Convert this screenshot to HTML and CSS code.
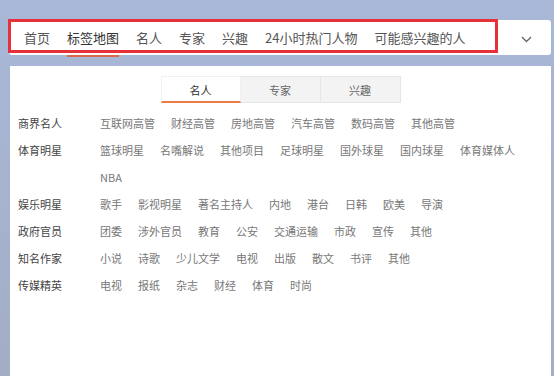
FILE: index.html
```html
<!DOCTYPE html>
<html lang="zh-CN">
<head>
  <meta charset="UTF-8">
  <meta name="viewport" content="width=device-width, initial-scale=1.0">
  <title>标签地图</title>
  <link rel="stylesheet" href="styles.css">
</head>
<body>

  <!-- 顶部导航 -->
  <div class="topnav">
    <a class="nav-item">首页</a>
    <a class="nav-item active">标签地图</a>
    <a class="nav-item">名人</a>
    <a class="nav-item">专家</a>
    <a class="nav-item">兴趣</a>
    <a class="nav-item">24小时热门人物</a>
    <a class="nav-item">可能感兴趣的人</a>
    <span class="nav-more">
      <svg width="11" height="7" viewBox="0 0 11 7"><path d="M1 1l4.5 4.5L10 1" fill="none" stroke="#666" stroke-width="1.4"/></svg>
    </span>
    <div class="mark"></div>
  </div>

  <!-- 标签面板 -->
  <div class="panel">
    <div class="tabs">
      <span class="tab active">名人</span>
      <span class="tab">专家</span>
      <span class="tab">兴趣</span>
    </div>

    <div class="row">
      <div class="label">商界名人</div>
      <div class="items">
        <a>互联网高管</a><a>财经高管</a><a>房地高管</a><a>汽车高管</a><a>数码高管</a><a>其他高管</a>
      </div>
    </div>
    <div class="row">
      <div class="label">体育明星</div>
      <div class="items">
        <a>篮球明星</a><a>名嘴解说</a><a>其他项目</a><a>足球明星</a><a>国外球星</a><a>国内球星</a><a>体育媒体人</a><a>NBA</a>
      </div>
    </div>
    <div class="row">
      <div class="label">娱乐明星</div>
      <div class="items">
        <a>歌手</a><a>影视明星</a><a>著名主持人</a><a>内地</a><a>港台</a><a>日韩</a><a>欧美</a><a>导演</a>
      </div>
    </div>
    <div class="row">
      <div class="label">政府官员</div>
      <div class="items">
        <a>团委</a><a>涉外官员</a><a>教育</a><a>公安</a><a>交通运输</a><a>市政</a><a>宣传</a><a>其他</a>
      </div>
    </div>
    <div class="row">
      <div class="label">知名作家</div>
      <div class="items">
        <a>小说</a><a>诗歌</a><a>少儿文学</a><a>电视</a><a>出版</a><a>散文</a><a>书评</a><a>其他</a>
      </div>
    </div>
    <div class="row">
      <div class="label">传媒精英</div>
      <div class="items">
        <a>电视</a><a>报纸</a><a>杂志</a><a>财经</a><a>体育</a><a>时尚</a>
      </div>
    </div>
  </div>

</body>
</html>
```

FILE: styles.css
```css
body {
  margin: 0;
  padding: 20px 3px 0 9px;
  height: 376px;
  box-sizing: border-box;
  overflow: hidden;
  font-family: "Noto Sans CJK SC", "Noto Sans", sans-serif;
  background: linear-gradient(180deg, #a9b8d8 0%, #a6b2cd 60%, #a3adc4 100%);
}
.topnav {
  position: relative;
  display: flex;
  align-items: center;
  height: 35px;
  padding-left: 15px;
  background-color: white;
  border-radius: 3px;
}
.nav-item {
  position: relative;
  display: flex;
  align-items: center;
  height: 35px;
  margin-right: 17px;
  font-size: 13px;
  color: #555;
  cursor: pointer;
}
.nav-item.active {
  color: #333;
}
.nav-item.active::after {
  content: "";
  position: absolute;
  left: 0;
  right: 0;
  bottom: -2px;
  height: 2px;
  background-color: #dc6a48;
}
.nav-more {
  display: flex;
  margin-left: auto;
  margin-right: 19px;
  margin-top: 3px;
}
/* 红色标注框 */
.mark {
  position: absolute;
  left: -1px;
  top: -1px;
  width: 484px;
  height: 28px;
  border: 3px solid #e5313a;
}
.panel {
  margin-top: 11px;
  margin-left: 1px;
  height: 310px;
  box-sizing: border-box;
  padding: 10px 8px 0 8px;
  background-color: white;
}
.tabs {
  display: flex;
  justify-content: center;
  margin-bottom: 7px;
}
.tab {
  width: 80px;
  height: 27px;
  line-height: 27px;
  text-align: center;
  font-size: 11px;
  color: #666;
  background-color: #f3f3f3;
  border: 1px solid #e6e6e6;
  border-left: none;
  box-sizing: border-box;
}
.tab:first-child {
  border-left: 1px solid #eee;
}
.tab.active {
  color: #333;
  background-color: white;
  border-color: #f0f0f0;
  border-bottom: 2px solid #ee7a45;
}
.row {
  display: flex;
  align-items: flex-start;
}
.label {
  width: 82px;
  flex-shrink: 0;
  font-size: 11px;
  line-height: 27px;
  color: #444;
}
.items {
  display: flex;
  flex-wrap: wrap;
  width: 440px;
}
.items a {
  margin-right: 16px;
  font-size: 11px;
  line-height: 27px;
  color: #777;
  cursor: pointer;
}
```
